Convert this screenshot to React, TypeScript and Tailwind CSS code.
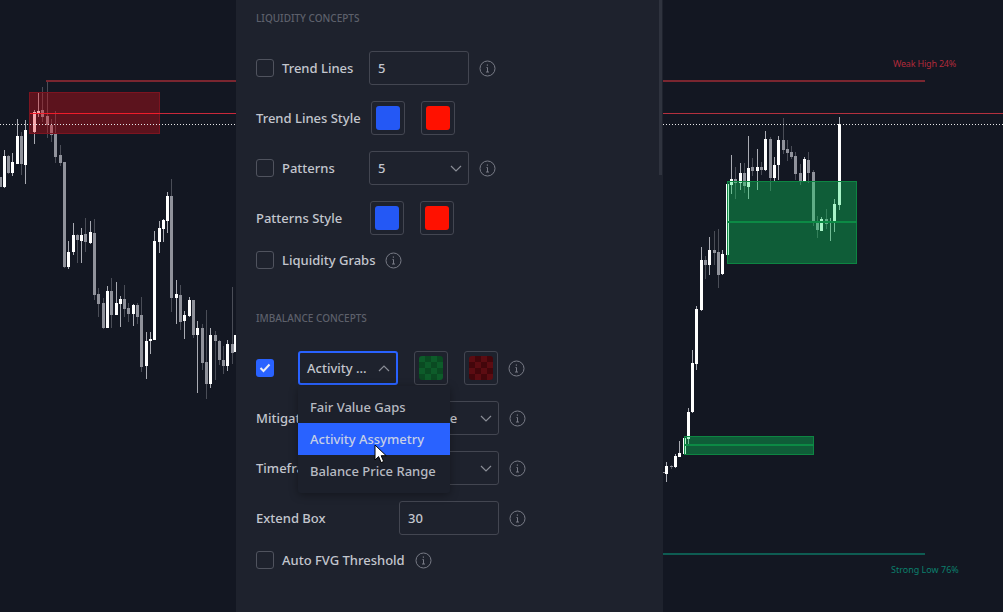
import React from 'react';

type Candle = [number, number, number, number, number, number];

// x, wick top, wick bottom, body top, body bottom, 1 = white / 0 = gray
const leftCandles: Candle[] = [
  [0,177,187,177,187,0],[4,150,188,156,187,1],[8,155,174,156,173,0],[12,153,176,162,173,1],
  [17,119,164,136,164,1],[21,132,175,136,164,0],[25,120,184,130,165,1],[34,110,144,112,132,1],
  [38,93,117,111,113,1],[42,87,122,110,117,0],[47,81,138,116,125,0],[51,119,142,125,135,0],
  [55,111,163,134,157,0],[60,145,166,155,163,0],[64,162,268,162,267,0],[68,241,269,252,267,1],
  [73,223,255,235,252,1],[77,234,263,235,240,0],[81,228,263,235,241,1],[85,218,252,234,242,0],
  [90,221,244,232,243,1],[94,219,300,233,295,0],[98,288,317,294,304,0],[103,298,329,303,328,0],
  [107,286,328,291,328,1],[111,278,328,291,315,0],[116,282,315,303,315,1],[120,296,327,299,304,1],
  [124,285,317,299,309,0],[128,303,322,308,314,0],[133,304,326,305,314,1],[137,303,324,305,317,0],
  [141,297,372,315,367,0],[146,332,379,341,366,1],[150,332,354,339,341,1],[154,231,340,241,340,1],
  [159,221,253,228,242,1],[163,219,242,220,229,1],[167,192,233,196,221,1],[171,179,312,196,298,0],
  [176,280,324,294,298,1],[180,285,330,295,322,0],[184,311,339,315,321,1],[189,297,317,300,316,1],
  [193,300,338,300,335,0],[197,321,393,328,335,1],[202,324,370,328,363,0],[206,310,399,362,384,0],
  [210,328,388,335,384,1],[215,331,380,335,341,0],[219,340,365,341,360,0],[223,346,374,360,366,0],
  [227,340,371,344,366,1],[232,287,364,344,353,0],[235,335,352,335,352,1],
];

const rightCandles: Candle[] = [
  [663,472,473,472,473,0],[666,462,482,466,474,1],[671,465,469,466,467,0],[675,454,468,456,467,1],
  [679,441,457,453,457,1],[684,438,454,438,454,1],[688,408,445,412,439,1],[692,350,413,363,412,1],
  [696,306,370,309,364,1],[701,247,311,260,310,1],[705,256,279,260,265,0],[709,237,275,250,265,1],
  [714,231,265,250,253,0],[718,229,288,252,275,0],[722,250,275,254,274,1],[727,184,255,184,255,1],
  [731,155,194,179,185,1],[735,167,199,179,183,0],[740,163,190,173,183,1],[744,163,193,173,186,0],
  [748,136,199,168,187,1],[752,158,176,167,171,0],[757,149,190,167,171,1],[761,162,175,167,170,0],
  [765,131,171,139,170,1],[770,137,191,139,178,0],[774,157,182,165,178,1],[778,136,180,140,165,1],
  [783,118,154,140,150,0],[787,140,161,149,153,0],[791,146,159,152,157,0],[795,152,180,156,174,0],
  [800,164,185,173,181,0],[804,157,181,159,181,1],[808,152,183,160,173,0],[813,170,226,172,223,0],
  [817,216,238,222,230,0],[821,217,231,219,231,1],[826,209,229,219,224,0],[830,218,241,222,223,1],
  [834,199,232,204,223,1],[839,117,210,124,205,1],
];

const Candles = ({ data }: { data: Candle[] }) => (
  <g shapeRendering="crispEdges">
    {data.map(([x, wt, wb, bt, bb, up]) => (
      <g key={x}>
        <rect x={x} y={wt} width={1} height={wb - wt} fill={up ? '#a9abb3' : '#4a4d57'} />
        <rect x={x - 1} y={bt} width={3} height={bb - bt} fill={up ? '#ffffff' : '#90929b'} />
      </g>
    ))}
  </g>
);

const GreenBox = ({ x, y, w, h, mid }: { x: number; y: number; w: number; h: number; mid: number }) => (
  <g shapeRendering="crispEdges">
    <rect x={x} y={y} width={w} height={h} fill="rgba(8,223,97,0.35)" stroke="#0d8542" />
    <rect x={x} y={mid} width={w} height={2} fill="#0c8a45" />
  </g>
);

const LeftChart = () => (
  <svg className="block shrink-0" width="236" height="612" viewBox="0 0 236 612">
    <Candles data={leftCandles} />
    <g shapeRendering="crispEdges">
      <rect x="46" y="80" width="190" height="2" fill="#7a2630" />
      <rect x="30" y="113" width="206" height="1" fill="#c9283a" />
      <rect x="29.5" y="92.5" width="130" height="41" fill="rgba(228,11,20,0.35)" stroke="#7c1420" />
      <rect x="30" y="113" width="130" height="1" fill="#f01c2a" />
    </g>
    <line x1="0" y1="124.5" x2="236" y2="124.5" stroke="#e8e8ea" strokeDasharray="1 2" />
  </svg>
);

const RightChart = () => (
  <div className="relative shrink-0 w-[340px] h-[612px]">
    <svg className="block" width="340" height="612" viewBox="663 0 340 612">
      <Candles data={rightCandles} />
      <GreenBox x={727.5} y={181.5} w={129} h={82} mid={221} />
      <GreenBox x={684.5} y={436.5} w={129} h={18} mid={444} />
      <g shapeRendering="crispEdges">
        <rect x="663" y="80" width="262" height="2" fill="#7a2630" />
        <rect x="663" y="113" width="340" height="1" fill="#b4303e" />
        <rect x="663" y="553" width="262" height="2" fill="#0e5c52" />
      </g>
      <line x1="663" y1="124.5" x2="1003" y2="124.5" stroke="#e8e8ea" strokeDasharray="1 2" />
    </svg>
    <span className="absolute left-[230px] top-[57px] text-[9px] leading-[14px] tracking-[-0.2px] text-[#b02a3a] font-['Noto_Sans',sans-serif] whitespace-nowrap">Weak High 24%</span>
    <span className="absolute left-[228px] top-[563px] text-[9px] leading-[14px] text-[#0b7f6c] font-['Noto_Sans',sans-serif] whitespace-nowrap">Strong Low 76%</span>
  </div>
);

const InfoIcon = ({ className = 'ml-[10px]' }: { className?: string }) => (
  <svg className={'shrink-0 ' + className} width="17" height="17" viewBox="0 0 17 17" fill="none" stroke="#787b86">
    <circle cx="8.5" cy="8.5" r="7.5" />
    <path d="M7.5 7.5h1v4.5M7 12h3" />
    <rect x="7.8" y="4.5" width="1.2" height="1.2" fill="#787b86" stroke="none" />
  </svg>
);

const Chevron = ({ up = false }: { up?: boolean }) => (
  <svg className="shrink-0" width="12" height="7" viewBox="0 0 12 7" fill="none" stroke="#8a8d96" strokeWidth="1.2">
    <path d={up ? 'M1 6l5-5 5 5' : 'M1 1l5 5 5-5'} />
  </svg>
);

const Check = ({ checked = false }: { checked?: boolean }) =>
  checked ? (
    <span className="flex items-center justify-center shrink-0 w-[18px] h-[18px] rounded-[3px] bg-[#2962ff]">
      <svg width="12" height="10" viewBox="0 0 12 10" fill="none" stroke="#e8ecf5" strokeWidth="2">
        <path d="M1.5 5l3 3 6-6.5" />
      </svg>
    </span>
  ) : (
    <span className="block shrink-0 w-[18px] h-[18px] rounded-[3px] border border-[#50535e]" />
  );

const Swatch = ({ color, className = '' }: { color: string; className?: string }) => (
  <span className={'flex items-center justify-center shrink-0 w-[34px] h-[34px] rounded-[3px] border border-[#434651] ' + className}>
    <span className="block w-[24px] h-[24px] rounded-[3px]" style={{ background: color }} />
  </span>
);

const Checker = ({ a, b, className = '' }: { a: string; b: string; className?: string }) => (
  <span className={'flex items-center justify-center shrink-0 w-[34px] h-[34px] rounded-[3px] border border-[#434651] ' + className}>
    <span className="grid grid-cols-4 w-[24px] h-[24px] rounded-[3px] overflow-hidden">
      {Array.from({ length: 16 }).map((_, i) => (
        <span key={i} style={{ background: (i + (i >> 2)) % 2 ? b : a }} />
      ))}
    </span>
  </span>
);

const Field = ({ value, chevron = false, valueClass = '' }: { value: string; chevron?: boolean; valueClass?: string }) => (
  <span className="flex items-center justify-between shrink-0 w-[100px] h-[34px] pl-[8px] pr-[6px] rounded-[3px] border border-[#434651] text-[#c3c6ce]">
    <span className={'pt-[2px] ' + valueClass}>{value}</span>
    {chevron && <Chevron />}
  </span>
);

const Label = ({ children, className = '' }: { children: React.ReactNode; className?: string }) => (
  <span className={'pt-[2px] ' + className}>{children}</span>
);

const Row = ({ children }: { children: React.ReactNode }) => (
  <div className="flex items-center h-[34px] mt-4">{children}</div>
);

const Heading = ({ children, className }: { children: React.ReactNode; className: string }) => (
  <div className={'h-4 text-[10px] leading-4 uppercase text-[#5d606b] ' + className}>{children}</div>
);

const Menu = () => (
  <div className="absolute left-0 top-[35px] w-[152px] pt-[5px] pb-[6px] rounded-b-[3px] bg-[#1c202b] shadow-[0_2px_8px_rgba(0,0,0,0.35)] z-10 text-[#b7bac2]">
    <div className="h-8 pl-3 leading-8">Fair Value Gaps</div>
    <div className="relative h-8 pl-3 leading-8 bg-[#2962ff] text-[#c6cfe6]">
      Activity Assymetry
      <svg className="absolute left-[76px] top-[21px]" width="14" height="20" viewBox="0 0 14 20">
        <path d="M1 1v15l3.6-3.4 2.5 6 2.6-1.1-2.5-5.8h5z" fill="#fff" stroke="#000" />
      </svg>
    </div>
    <div className="h-8 pl-3 leading-8">Balance Price Range</div>
  </div>
);

const Panel = () => (
  <div className="relative flex flex-col shrink-0 w-[427px] h-[612px] pl-5 pt-[10px] bg-[#1e222d] overflow-hidden text-[13px] font-medium text-[#c3c6ce] font-['Noto_Sans',sans-serif]">
    <div className="absolute left-[423px] top-0 w-[3px] h-[175px] bg-[#2f333e]" />
    <Heading className="mb-[9px]">Liquidity Concepts</Heading>
    <Row>
      <Check />
      <Label className="w-[87px] ml-2">Trend Lines</Label>
      <Field value="5" />
      <InfoIcon />
    </Row>
    <Row>
      <Label className="w-[115px]">Trend Lines Style</Label>
      <Swatch color="#2458f5" />
      <Swatch color="#ff1100" className="ml-4" />
    </Row>
    <Row>
      <Check />
      <Label className="w-[87px] ml-2">Patterns</Label>
      <Field value="5" chevron />
      <InfoIcon />
    </Row>
    <Row>
      <Label className="w-[114px]">Patterns Style</Label>
      <Swatch color="#2458f5" />
      <Swatch color="#ff1100" className="ml-4" />
    </Row>
    <div className="flex items-center h-[18px] mt-4">
      <Check />
      <Label className="ml-2">Liquidity Grabs</Label>
      <InfoIcon />
    </div>
    <Heading className="mt-[41px] mb-[9px]">Imbalance Concepts</Heading>
    <Row>
      <Check checked />
      <div className="relative ml-6">
        <span className="flex items-center justify-between w-[100px] h-[34px] pl-[7px] pr-[6px] rounded-[3px] border-2 border-[#2962ff]">
          <span className="pt-[2px]">Activity ...</span>
          <Chevron up />
        </span>
        <Menu />
      </div>
      <Checker a="#0d5c2a" b="#0a4a22" className="ml-4" />
      <Checker a="#5c0c12" b="#43060b" className="ml-4" />
      <InfoIcon />
    </Row>
    <Row>
      <Label className="w-[143px]">Mitigation</Label>
      <Field value="Average" chevron valueClass="tracking-[-0.3px]" />
      <InfoIcon />
    </Row>
    <Row>
      <Label className="w-[143px]">Timeframe</Label>
      <Field value="Chart" chevron />
      <InfoIcon />
    </Row>
    <Row>
      <Label className="w-[143px]">Extend Box</Label>
      <Field value="30" />
      <InfoIcon />
    </Row>
    <div className="flex items-center h-[18px] mt-4">
      <Check />
      <Label className="ml-2">Auto FVG Threshold</Label>
      <InfoIcon />
    </div>
  </div>
);

export default function App() {
  return (
    <div className="flex w-[1003px] h-[612px] overflow-hidden bg-[#131722]">
      <LeftChart />
      <Panel />
      <RightChart />
    </div>
  );
}
